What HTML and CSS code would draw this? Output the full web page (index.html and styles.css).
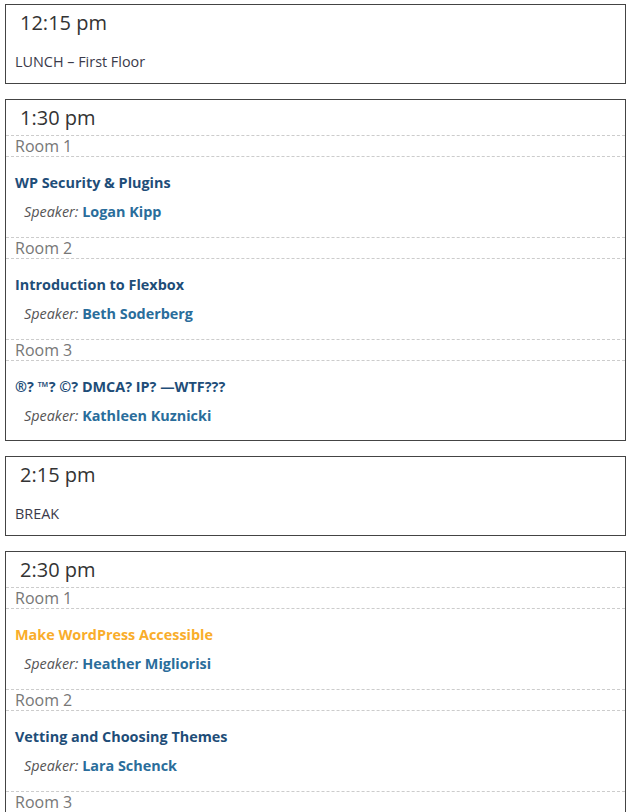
FILE: index.html
```html
<!DOCTYPE html>
<html lang="en">
<head>
    <meta charset="UTF-8">
    <title>Schedule</title>
    <link rel="stylesheet" href="styles.css">
</head>
<body>

<div class="schedule">

    <div class="slot">
        <h3 class="time">12:15 pm</h3>
        <p class="note">LUNCH – First Floor</p>
    </div>

    <div class="slot">
        <h3 class="time">1:30 pm</h3>
        <div class="room">Room 1</div>
        <div class="session">
            <a class="title" href="#">WP Security &amp; Plugins</a>
            <p class="speaker"><em>Speaker:</em> <a href="#">Logan Kipp</a></p>
        </div>
        <div class="room">Room 2</div>
        <div class="session">
            <a class="title" href="#">Introduction to Flexbox</a>
            <p class="speaker"><em>Speaker:</em> <a href="#">Beth Soderberg</a></p>
        </div>
        <div class="room">Room 3</div>
        <div class="session">
            <a class="title" href="#">®? ™? ©? DMCA? IP? —WTF???</a>
            <p class="speaker"><em>Speaker:</em> <a href="#">Kathleen Kuznicki</a></p>
        </div>
    </div>

    <div class="slot">
        <h3 class="time">2:15 pm</h3>
        <p class="note">BREAK</p>
    </div>

    <div class="slot">
        <h3 class="time">2:30 pm</h3>
        <div class="room">Room 1</div>
        <div class="session">
            <a class="title hover" href="#">Make WordPress Accessible</a>
            <p class="speaker"><em>Speaker:</em> <a href="#">Heather Migliorisi</a></p>
        </div>
        <div class="room">Room 2</div>
        <div class="session">
            <a class="title" href="#">Vetting and Choosing Themes</a>
            <p class="speaker"><em>Speaker:</em> <a href="#">Lara Schenck</a></p>
        </div>
        <div class="room">Room 3</div>
        <div class="session">
            <a class="title" href="#">Content Strategy</a>
            <p class="speaker"><em>Speaker:</em> <a href="#">TBA</a></p>
        </div>
    </div>

</div>

</body>
</html>
```

FILE: styles.css
```css
body {
    margin: 0;
    background-color: #fff;
    font-family: "Open Sans", "DejaVu Sans", sans-serif;
    color: #333;
}
.schedule {
    display: flex;
    flex-direction: column;
    gap: 15px;
    padding: 4px 5px;
}
.slot {
    display: flex;
    flex-direction: column;
    border: 1px solid #444;
}
.time {
    margin: 0;
    padding: 4px 0 3px 14px;
    font-size: 20px;
    font-weight: normal;
    line-height: 28px;
    color: #333;
}
.note {
    margin: 0;
    padding: 12px 0 11px 9px;
    font-size: 14.4px;
    line-height: 20px;
    color: #3a3a4a;
}
.room {
    padding-left: 9px;
    border-top: 1px dashed #ccc;
    border-bottom: 1px dashed #ccc;
    font-size: 16px;
    line-height: 20px;
    color: #777;
}
.session {
    display: flex;
    flex-direction: column;
    align-items: flex-start;
    gap: 9px;
    padding: 16px 0 15px 9px;
}
.session:last-child {
    padding-bottom: 14px;
}
.title {
    font-size: 14.4px;
    font-weight: bold;
    line-height: 20px;
    color: #1e4d78;
    text-decoration: none;
}
.title.hover {
    color: #f9ad2b;
}
.speaker {
    margin: 0;
    padding-left: 9px;
    font-size: 14.4px;
    line-height: 20px;
    color: #555;
}
.speaker a {
    font-weight: bold;
    color: #2a6d9b;
    text-decoration: none;
}
```
